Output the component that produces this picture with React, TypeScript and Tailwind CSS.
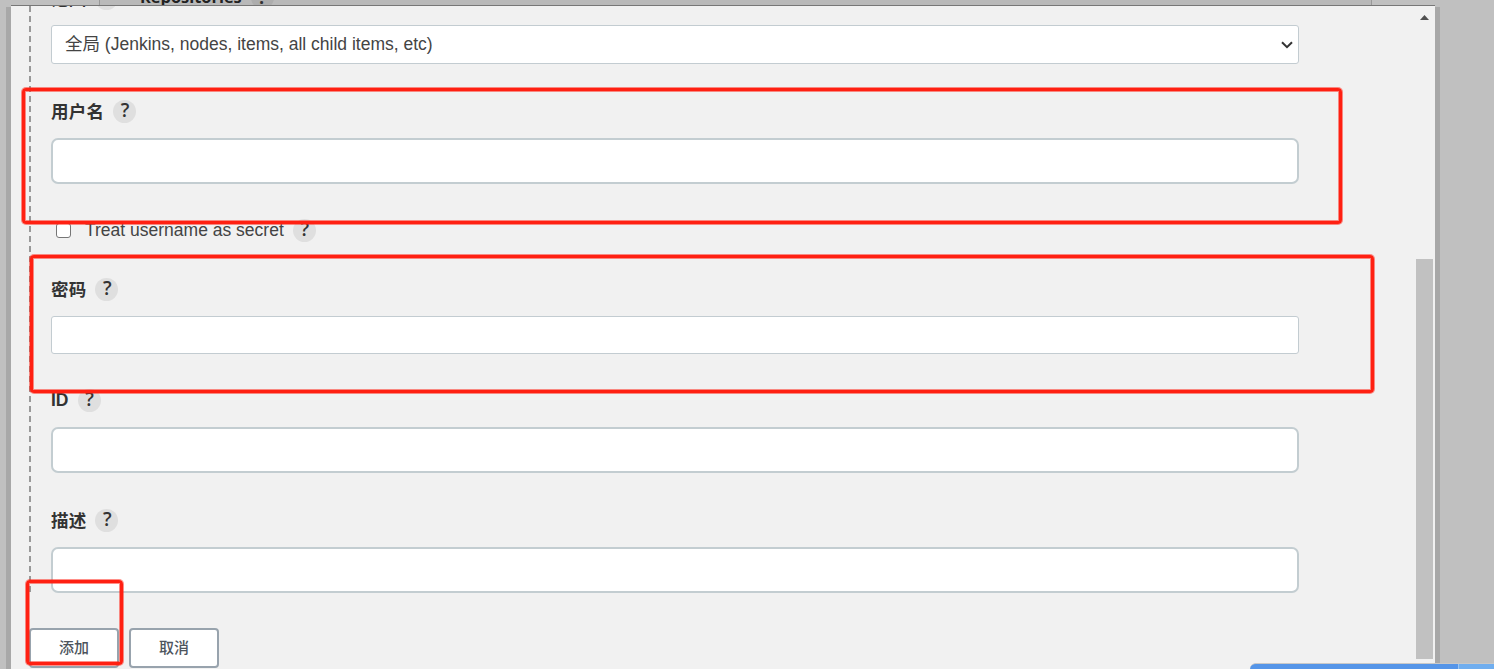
import type { ReactNode } from "react";

function HelpBadge() {
  return (
    <span className="flex h-[23px] w-[23px] shrink-0 items-center justify-center rounded-full bg-[#dfdfdf] font-['Open_Sans',sans-serif] text-[19px] leading-[23px] font-semibold text-[#333]">
      <span className="-mt-px pl-px">?</span>
    </span>
  );
}

function Label({ children, latin = false }: { children: ReactNode; latin?: boolean }) {
  return (
    <div className="mb-[15px] flex h-6 items-center gap-[9px] text-[17.5px] leading-6 font-bold">
      <span className={latin ? "" : "pt-0.5 tracking-[0.2px]"}>{children}</span>
      <HelpBadge />
    </div>
  );
}

function TextInput({ type = "text" }: { type?: string }) {
  return (
    <input
      type={type}
      className={`block w-full bg-white px-3 outline-none ${
        type === "password"
          ? "h-[38px] rounded-[3px] border border-[#c3ccd1]"
          : "h-[46px] rounded-[7px] border-2 border-[#c3cdd1]"
      }`}
    />
  );
}

function DialogButton({ children }: { children: ReactNode }) {
  return (
    <button className="h-10 w-[90px] rounded-[4px] border-2 border-[#98a3ad] bg-white text-[15px] font-medium text-[#4d545d]">
      {children}
    </button>
  );
}

function Marker({ className }: { className: string }) {
  return (
    <div
      className={`pointer-events-none absolute rounded-[4px] border-[3px] border-[#ff2012] shadow-[0_0_0_1px_rgba(255,32,18,0.5),inset_0_0_0_1px_rgba(255,32,18,0.5)] ${className}`}
    />
  );
}

export default function App() {
  return (
    <div className="relative flex h-[669px] w-[1494px] overflow-hidden bg-[#c0c0c0] font-['Liberation_Sans','Noto_Sans_CJK_SC',sans-serif] text-[#333]">
      {/* page behind the dialog */}
      <div className="absolute top-0 left-[99px] h-[5px] w-[1273px] overflow-hidden border-x border-[#999] bg-[#b9b9b9]">
        <div className="-mt-[15px] ml-10 flex items-center gap-[9px] text-[17.5px] leading-6 font-bold">
          <span className="font-['Open_Sans',sans-serif] text-[16.4px] text-[#222]">Repositories</span>
          <span className="flex h-[23px] w-[23px] items-center justify-center rounded-full bg-[#adadad] font-['Open_Sans',sans-serif]">?</span>
        </div>
      </div>

      <div className="ml-1.5 mt-[7px] w-[5px] bg-[#a8a8a8]" />

      <div className="mt-[5px] flex w-[1424px] border-t border-[#777] bg-[#f1f1f1]">
        <div className="w-[1288px] pl-[18px]">
          <div className="h-[587px] bg-[repeating-linear-gradient(to_bottom,#999_0px,#999_6px,transparent_6px,transparent_10px)] bg-[length:2px_100%] bg-no-repeat pl-[22px]">
            <div className="h-[19px] overflow-hidden">
              <div className="-mt-5">
                <Label>范围</Label>
              </div>
            </div>
            <div className="flex h-[39px] items-center justify-between rounded-[3px] border border-[#c3ccd1] bg-white pr-[5px] pl-[13px] text-[17.5px] text-[#444]">
              <span>全局 (Jenkins, nodes, items, all child items, etc)</span>
              <svg width="12" height="8" viewBox="0 0 12 8" fill="none" stroke="#333" strokeWidth="2">
                <path d="M1 1.2 6 6.2l5-5" />
              </svg>
            </div>

            <div className="mt-[35px]">
              <Label>用户名</Label>
              <TextInput />
            </div>

            <div className="mt-[34px] flex h-6 items-center pl-[5px] text-[17.5px]">
              <span className="h-[15px] w-[15px] rounded-[3px] border border-[#767676] bg-white" />
              <span className="mr-[9px] ml-[14px] text-[#444]">Treat username as secret</span>
              <HelpBadge />
            </div>

            <div className="mt-[35px]">
              <Label>密码</Label>
              <TextInput type="password" />
            </div>
            <div className="mt-[34px]">
              <Label latin>ID</Label>
              <TextInput />
            </div>
            <div className="mt-[35px]">
              <Label>描述</Label>
              <TextInput />
            </div>
          </div>

          <div className="mt-[35px] flex gap-2.5">
            <DialogButton>添加</DialogButton>
            <DialogButton>取消</DialogButton>
          </div>
        </div>

        {/* scrollbar */}
        <div className="ml-auto flex w-[19px] flex-col items-start">
          <svg className="mt-[9px] ml-1" width="9" height="5" viewBox="0 0 9 5">
            <path d="M4.5 0 9 5H0z" fill="#505050" />
          </svg>
          <div className="mt-[239px] h-[400px] w-[17px] bg-[#c1c1c1]" />
        </div>
      </div>

      <div className="mt-[7px] w-[5px] bg-[#a8a8a8]" />

      <Marker className="top-[88px] left-[22px] h-[136px] w-[1320px]" />
      <Marker className="top-[255px] left-[30px] h-[138px] w-[1344px]" />
      <Marker className="top-[580px] left-[26px] h-[85px] w-[97px]" />

      {/* floating bar at the lower right */}
      <div className="absolute right-0 bottom-0 flex h-1.5 w-[244px] overflow-hidden rounded-tl-[6px] border-t border-[#c8c8c8] bg-[#5595e8]">
        <div className="ml-auto w-9 border-l border-[#9cc6f0] bg-[#70aeef]" />
      </div>
    </div>
  );
}
